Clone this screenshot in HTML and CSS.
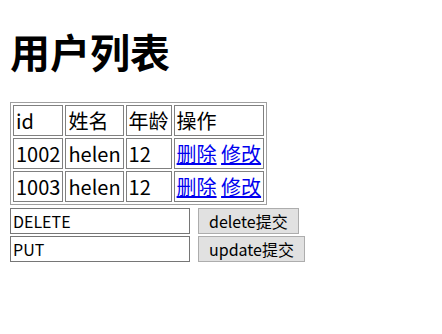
FILE: index.html
```html
<!DOCTYPE html>
<html lang="zh">
<head>
    <meta charset="UTF-8">
    <meta name="viewport" content="width=device-width, initial-scale=1.0">
    <title>用户列表</title>
    <link rel="stylesheet" href="styles.css">
</head>
<body>
    <h1>用户列表</h1>

    <table class="user-table">
        <tr>
            <td>id</td>
            <td>姓名</td>
            <td>年龄</td>
            <td>操作</td>
        </tr>
        <tr>
            <td>1002</td>
            <td>helen</td>
            <td>12</td>
            <td><a href="#">删除</a> <a href="#">修改</a></td>
        </tr>
        <tr>
            <td>1003</td>
            <td>helen</td>
            <td>12</td>
            <td><a href="#">删除</a> <a href="#">修改</a></td>
        </tr>
    </table>

    <!-- method override forms -->
    <form class="method-form" method="POST">
        <input type="text" name="_method" value="DELETE">
        <button type="submit">delete提交</button>
    </form>
    <form class="method-form" method="POST">
        <input type="text" name="_method" value="PUT">
        <button type="submit">update提交</button>
    </form>
</body>
</html>
```

FILE: styles.css
```css
body {
    margin: 0;
    padding: 0 10px 10px;
    font-family: "Noto Sans CJK SC", "Noto Sans", sans-serif;
    font-size: 20px;
    color: #000;
    background: #fff;
}
h1 {
    font-size: 40px;
    line-height: 48px;
    font-weight: bold;
    margin: 27px 0;
}
.user-table {
    border: 1px solid #a0a0a0;
    border-spacing: 2px;
}
.user-table td {
    border: 1px solid #808080;
    padding: 1px 2px;
    line-height: 27px;
    white-space: nowrap;
}
a {
    color: #0000ee;
}
.method-form {
    display: flex;
    align-items: center;
    gap: 8px;
    margin-top: 2px;
}
.method-form:first-of-type {
    margin-top: 3px;
}
.method-form input {
    width: 180px;
    height: 26px;
    box-sizing: border-box;
    border: 1px solid #767676;
    padding: 0 2px;
    font-family: "Noto Sans CJK SC", "Noto Sans", sans-serif;
    font-size: 16px;
    margin: 0;
}
.method-form button {
    height: 26px;
    padding: 0 10px;
    background-color: #e1e1e1;
    border: 1px solid #adadad;
    border-radius: 0;
    font-family: "Noto Sans CJK SC", "Noto Sans", sans-serif;
    font-size: 16px;
    line-height: 22px;
    color: #000;
    margin: 0;
}
```
